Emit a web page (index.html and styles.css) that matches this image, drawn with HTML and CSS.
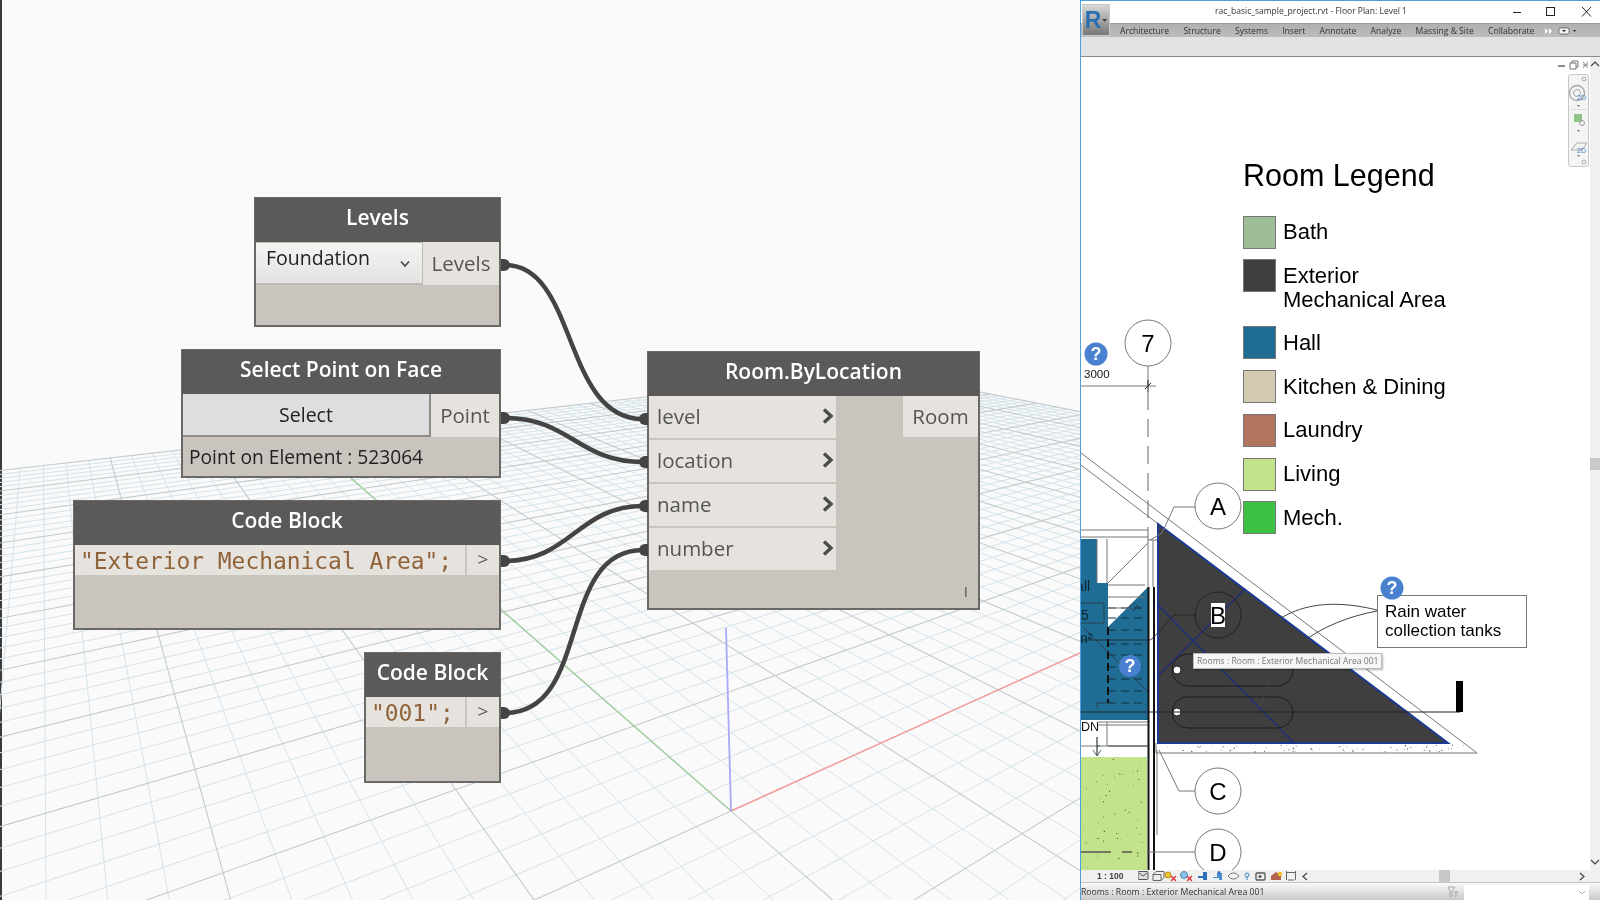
FILE: index.html
```html
<!DOCTYPE html>
<html lang="en">
<head>
  <meta charset="utf-8">
  <title>Dynamo and Revit</title>
  <link rel="stylesheet" href="styles.css">
</head>
<body>
<div class="app">

  <!-- Dynamo canvas -->
  <div class="canvas">
    <svg class="layer" id="grid" viewBox="0 0 1080 900"></svg>

    <div class="node node-levels">
      <div class="node-title">Levels</div>
      <div class="row">
        <div class="dropdown">
          <span>Foundation</span>
          <svg width="12" height="8" viewBox="0 0 12 8"><path d="M2 1.500 6 6l4-4.500" fill="none" stroke="#444" stroke-width="1.600"/></svg>
        </div>
        <div class="port-out port-levels">Levels</div>
      </div>
    </div>

    <div class="node node-point">
      <div class="node-title">Select Point on Face</div>
      <div class="row">
        <div class="select-btn">Select</div>
        <div class="port-out port-point">Point</div>
      </div>
      <div class="node-value">Point on Element : 523064</div>
    </div>

    <div class="node node-code1">
      <div class="node-title">Code Block</div>
      <div class="row row-code">
        <div class="code">"Exterior Mechanical Area";</div>
        <div class="code-out">&gt;</div>
      </div>
    </div>

    <div class="node node-code2">
      <div class="node-title">Code Block</div>
      <div class="row row-code">
        <div class="code">"001";</div>
        <div class="code-out">&gt;</div>
      </div>
    </div>

    <div class="node node-room">
      <div class="node-title">Room.ByLocation</div>
      <div class="room-body">
        <div class="inputs">
          <div class="port-in"><span>level</span><svg class="chev" viewBox="0 0 14 18"><path d="M3 2.500 10 9l-7 6.500" /></svg></div>
          <div class="port-in"><span>location</span><svg class="chev" viewBox="0 0 14 18"><path d="M3 2.500 10 9l-7 6.500" /></svg></div>
          <div class="port-in"><span>name</span><svg class="chev" viewBox="0 0 14 18"><path d="M3 2.500 10 9l-7 6.500" /></svg></div>
          <div class="port-in"><span>number</span><svg class="chev" viewBox="0 0 14 18"><path d="M3 2.500 10 9l-7 6.500" /></svg></div>
        </div>
        <div class="port-out port-room">Room</div>
      </div>
      <div class="lacing">I</div>
    </div>

    <svg class="layer" viewBox="0 0 1080 900">
      <g class="wires">
        <path d="M505 265C578 265 562 419 643 419"/>
        <path d="M505 418C570 418 578 462 643 462"/>
        <path d="M505 561C570 561 578 506 643 506"/>
        <path d="M505 713C592 713 556 550 643 550"/>
      </g>
      <g class="ports">
        <path d="M501 259h3a6 6 0 0 1 0 12h-3z"/>
        <path d="M501 412h3a6 6 0 0 1 0 12h-3z"/>
        <path d="M501 555h3a6 6 0 0 1 0 12h-3z"/>
        <path d="M501 707h3a6 6 0 0 1 0 12h-3z"/>
        <path d="M648 413h-3a6 6 0 0 0 0 12h3z"/>
        <path d="M648 456h-3a6 6 0 0 0 0 12h3z"/>
        <path d="M648 500h-3a6 6 0 0 0 0 12h3z"/>
        <path d="M648 544h-3a6 6 0 0 0 0 12h3z"/>
      </g>
    </svg>
  </div>

  <!-- Revit window -->
  <div class="revit">
    <div class="logo">R<svg width="5" height="3" viewBox="0 0 5 3"><path d="M0 0h5L2.500 3z" fill="#444"/></svg></div>
    <div class="titlebar">
      <div class="doc-title">rac_basic_sample_project.rvt - Floor Plan: Level 1</div>
      <svg class="win-btns" width="80" height="14" viewBox="0 0 80 14">
        <path d="M0 7.500h8" stroke="#222"/>
        <rect x="33.500" y="2.500" width="8" height="8" fill="none" stroke="#222"/>
        <path d="M69 2l9 9.500M78 2l-9 9.500" stroke="#222"/>
      </svg>
    </div>
    <div class="tabs">
      <span>Architecture</span><span>Structure</span><span>Systems</span><span>Insert</span><span>Annotate</span><span>Analyze</span><span>Massing &amp; Site</span><span>Collaborate</span>
      <svg class="tab-more" width="34" height="8" viewBox="0 0 34 8">
        <path d="M0 1l3 3-3 3zM4 1l3 3-3 3z" fill="#fff"/>
        <rect x="14" y="1" width="10" height="6" rx="1.500" fill="#f2f2f2" stroke="#333" stroke-width=".6"/>
        <path d="M17 3h4l-2 2zM28 3h3l-1.500 2z" fill="#222"/>
      </svg>
    </div>
    <div class="ribbon"></div>

    <div class="view-row">
      <div class="sheet">
        <svg class="plan" viewBox="1081 57 509 813">
          <!-- hall -->
          <path class="hall" d="M1081 539h16v44h11v44l40-40v133h-67z"/>
          <g class="stair">
            <path d="M1108 608h40M1108 618h40M1108 630h40M1108 644h40M1108 655h40M1108 667h40M1108 679h40M1108 691h40M1108 703h40"/>
          </g>
          <path class="thick-dash" d="M1108 627v76"/>
          <path class="thin" d="M1097 708v-5h11M1083 627l65 65M1081 603h23v20h-23M1135 602l-6 5 5 4 3-6 3 4"/>
          <text class="tag" x="1066" y="591">Hall</text>
          <text class="tag" x="1081" y="620">5</text>
          <text class="tag" x="1076" y="643">m²</text>

          <!-- living -->
          <rect class="living" x="1081" y="757" width="66" height="113"/>
          <g id="speck-living" class="speck"></g>
          <path class="green-dash" d="M1081 852h30M1122 852h10"/>

          <!-- walls and stair lines -->
          <path class="wall" d="M1081 530h67M1081 537h67M1097 539v44M1107 539v44M1108 583l40-40M1148 540v47M1153 540v47M1148 540h9M1081 722h67M1081 725h67M1081 746h67M1107 722v24M1097 725v30M1108 585h37M1108 597h37M1108 608h22"/>
          <path class="wall-heavy" d="M1148.500 587V870M1154 587V870"/>
          <path class="wall-shade" d="M1157 750v85"/>
          <path class="thin" d="M1097 725v30M1093 750l4 6 4-6M1100 746h-3M1108 746h40M1148 852h-1"/>
          <rect x="1081" y="720" width="17" height="17" fill="#fff"/>
          <text class="tag tag-dn" x="1081" y="731">DN</text>

          <!-- outer diagonal -->
          <path class="wall" d="M1081 453 1477 753H1156v-10M1081 465 1157 523"/>

          <!-- exterior mechanical area -->
          <path class="room" d="M1158 524 1448 743H1158z"/>
          <path class="room-edge" d="M1158 524 1448 743H1158z"/>
          <path class="beam" d="M1158 676 1245 589M1158 605 1294 743"/>
          <g id="speck-slab" class="speck"></g>
          <rect class="pill" x="1172" y="654" width="121" height="32" rx="16"/>
          <rect class="pill" x="1172" y="697" width="121" height="31" rx="15.500"/>
          <circle class="dot" cx="1177" cy="670" r="4"/>
          <circle class="dot" cx="1177" cy="712" r="4"/>
          <path class="dark" d="M1081 712H1460"/>
          <rect x="1456" y="681" width="7" height="31" fill="#000"/>
          <path class="leader" d="M1377 610C1320 596 1272 606 1243 660"/>
          <path class="leader" d="M1377 611C1320 622 1276 650 1260 707M1256 698l4 9 4-8"/>

          <!-- grid 7 -->
          <path class="wall" d="M1148 366v20M1081 386H1156"/>
          <path class="grid-dash" d="M1148 392V540"/>
          <path class="dark" d="M1145 389l6-6M1148 380v12"/>
          <text class="dim" x="1084" y="378">3000</text>

          <!-- leaders -->
          <path class="wall" d="M1196 507h-22l-12 26-12 7M1179 791h17M1179 791l-20-41M1196 852h-48"/>
          <path class="dark-thin" d="M1196 615h-22l-21 23-3 2h-69"/>

          <!-- bubbles -->
          <circle class="bubble" cx="1148" cy="343" r="23"/>
          <circle class="bubble" cx="1218" cy="506" r="23"/>
          <circle class="bubble bubble-dark" cx="1218" cy="615" r="23"/>
          <circle class="bubble" cx="1218" cy="791" r="23"/>
          <circle class="bubble" cx="1218" cy="852" r="23"/>
          <rect x="1211" y="603" width="14" height="24" fill="#fff"/>
          <text class="bub-text" x="1148" y="352">7</text>
          <text class="bub-text" x="1218" y="515">A</text>
          <text class="bub-text" x="1218" y="624">B</text>
          <text class="bub-text" x="1218" y="800">C</text>
          <text class="bub-text" x="1218" y="861">D</text>

          <!-- warnings -->
          <circle class="warn" cx="1096" cy="354" r="11.500"/>
          <text class="warn-text" x="1096" y="360">?</text>
          <circle class="warn" cx="1130" cy="666" r="11"/>
          <text class="warn-text" x="1130" y="672">?</text>
        </svg>

        <div class="legend">
          <h2 class="legend-title">Room Legend</h2>
          <div class="legend-row"><i class="swatch sw-bath"></i><span>Bath</span></div>
          <div class="legend-row legend-two"><i class="swatch sw-ext"></i><span>Exterior<br>Mechanical Area</span></div>
          <div class="legend-row"><i class="swatch sw-hall"></i><span>Hall</span></div>
          <div class="legend-row"><i class="swatch sw-kitchen"></i><span>Kitchen &amp; Dining</span></div>
          <div class="legend-row"><i class="swatch sw-laundry"></i><span>Laundry</span></div>
          <div class="legend-row"><i class="swatch sw-living"></i><span>Living</span></div>
          <div class="legend-row"><i class="swatch sw-mech"></i><span>Mech.</span></div>
        </div>

        <div class="callout">Rain water<br>collection tanks</div>
        <svg class="callout-warn" width="24" height="24" viewBox="0 0 24 24">
          <circle class="warn" cx="12" cy="12" r="11.500"/>
          <text class="warn-text" x="12" y="18">?</text>
        </svg>
        <div class="tooltip">Rooms : Room : Exterior Mechanical Area 001</div>

        <svg class="view-ctl" width="30" height="10" viewBox="0 0 30 10">
          <path d="M0 6h7" stroke="#888" stroke-width="2"/>
          <path d="M12 3h6v6h-6zM14 3V1h6v6h-2" fill="none" stroke="#777"/>
          <path d="M25 2l5 6M30 2l-5 6M25 5h5" fill="none" stroke="#888"/>
        </svg>

        <div class="navbar">
          <svg width="21" height="93" viewBox="0 0 21 93">
            <circle cx="16" cy="5" r="2" fill="none" stroke="#aaa"/>
            <circle cx="9" cy="19" r="7.500" fill="none" stroke="#aaa" stroke-width="1.400"/>
            <circle cx="9" cy="19" r="3.500" fill="none" stroke="#aaa"/>
            <text class="nav-2d" x="9" y="26">2D</text>
            <path d="M9 31h3l-1.500 2z" fill="#777"/>
            <path d="M2 35.500h17" stroke="#ddd"/>
            <rect x="6" y="40" width="8" height="8" fill="#8fc58a"/>
            <circle cx="14" cy="49" r="2.500" fill="none" stroke="#999"/>
            <path d="M9 56h3l-1.500 2z" fill="#777"/>
            <path d="M3 76l6-7h10l-5 7z" fill="none" stroke="#aaa"/>
            <text class="nav-2d" x="9" y="79">2D</text>
            <path d="M9 81h3l-1.500 2z" fill="#777"/>
            <circle cx="16" cy="88" r="2" fill="none" stroke="#aaa"/>
          </svg>
        </div>
      </div>

      <div class="vscroll">
        <svg width="10" height="6" viewBox="0 0 10 6"><path d="M1 5l4-4 4 4" fill="none" stroke="#444" stroke-width="1.200"/></svg>
        <div class="vthumb"></div>
        <svg width="10" height="6" viewBox="0 0 10 6"><path d="M1 1l4 4 4-4" fill="none" stroke="#444" stroke-width="1.200"/></svg>
      </div>
    </div>

    <div class="viewbar">
      <span class="scale">1 : 100</span>
      <svg class="view-icons" width="158" height="12" viewBox="0 0 158 12">
        <rect x="0" y="1.500" width="10" height="8" rx="1" fill="#ddd" stroke="#555"/>
        <path d="M1 3l4 3 4-3" fill="none" stroke="#555"/>
        <path d="M15 4.500h8v6h-8zM15 4.500l3-3h8v6l-3 3" fill="#eee" stroke="#666"/>
        <circle cx="30" cy="5" r="3" fill="#f1c232" stroke="#b78c10"/>
        <path d="M33 6l5 5M38 6l-5 5" stroke="#d33" stroke-width="1.400"/>
        <circle cx="46" cy="5" r="3.500" fill="#8cc4e8" stroke="#4a86b8"/>
        <path d="M49 6l5 5M54 6l-5 5" stroke="#d33" stroke-width="1.400"/>
        <path d="M60 6h5V2h4v8h-4V8h-5z" fill="#2c6fb5"/>
        <path d="M75 7h4V3h5v7h-3V8h-6z" fill="#4d8dd1"/><circle cx="81" cy="2.500" r="1.500" fill="#2c6fb5"/>
        <path d="M90 6c3-4 8-4 11 0-3 4-8 4-11 0z" fill="none" stroke="#777"/>
        <circle cx="109" cy="5" r="2" fill="none" stroke="#3d86c6"/><path d="M109 7v3" stroke="#3d86c6"/>
        <rect x="118" y="3" width="9" height="7" rx="1" fill="none" stroke="#555" stroke-width="1.300"/><circle cx="122" cy="6.500" r="1.500" fill="#555"/>
        <path d="M133 6l5-4 5 4v4h-10z" fill="#b5624f"/><rect x="140" y="2" width="4" height="4" fill="#f1c232"/>
        <path d="M148.500 2.500h9M148.500 1v9M157.500 1v9M150 10h6" fill="none" stroke="#666"/>
      </svg>
      <svg class="hbar-arrow" width="6" height="9" viewBox="0 0 6 9"><path d="M5 1 1 4.500 5 8" fill="none" stroke="#444" stroke-width="1.200"/></svg>
      <div class="hthumb"></div>
      <svg class="hbar-arrow hbar-right" width="6" height="9" viewBox="0 0 6 9"><path d="M1 1l4 3.500L1 8" fill="none" stroke="#444" stroke-width="1.200"/></svg>
    </div>

    <div class="statusbar">
      <span class="status-text">Rooms : Room : Exterior Mechanical Area 001</span>
      <svg class="status-filter" width="12" height="12" viewBox="0 0 12 12"><path d="M1 1h7L5 5v5L3 11V5zM9 5v6M7 7l2-2 2 2" fill="none" stroke="#aaa"/></svg>
      <div class="status-box"><svg width="8" height="5" viewBox="0 0 8 5"><path d="M1 1l3 3 3-3" fill="none" stroke="#aaa"/></svg></div>
    </div>
  </div>

</div>
<script src="plan.js"></script>
</body>
</html>
```

FILE: styles.css
```css
html, body {
  margin: 0;
  padding: 0;
  overflow: hidden;
  background: #f9f9f9;
}
.app {
  display: flex;
  width: 1600px;
  height: 900px;
  filter: blur(0.4px);
  font-family: "Open Sans", sans-serif;
}

/* Dynamo canvas */
.canvas {
  position: relative;
  flex: 1;
  overflow: hidden;
  background: #fafafa;
}
.canvas::before {
  content: "";
  position: absolute;
  left: 0;
  top: 0;
  bottom: 0;
  width: 2px;
  background: #3a3a3a;
}
.layer {
  position: absolute;
  left: 0;
  top: 0;
  width: 1080px;
  height: 900px;
  pointer-events: none;
}
.minor { stroke: #d5e3ea; stroke-width: 1; fill: none; }
.major { stroke: #c3cbce; stroke-width: 1.100; fill: none; }
.axis-x { stroke: #f79a9a; stroke-width: 1.400; }
.axis-y { stroke: #a3cf9f; stroke-width: 1.400; }
.axis-z { stroke: #a9a9f7; stroke-width: 1.800; }
.wires path {
  fill: none;
  stroke: #444;
  stroke-width: 4.500;
}
.ports path { fill: #444; }

.node {
  position: absolute;
  box-sizing: border-box;
  display: flex;
  flex-direction: column;
  background: #c9c4bd;
  border: 2px solid #6b6966;
  color: #555;
  font-size: 20.500px;
}
.node-levels { left: 254px; top: 197px; width: 247px; height: 130px; }
.node-point { left: 181px; top: 349px; width: 320px; height: 129px; }
.node-code1 { left: 73px; top: 500px; width: 428px; height: 130px; }
.node-code2 { left: 364px; top: 652px; width: 137px; height: 131px; }
.node-room { left: 647px; top: 351px; width: 333px; height: 259px; }

.node-title {
  height: 44px;
  flex: none;
  margin: -1px -1px 0;
  background: #5c5a58;
  color: #fff;
  font-size: 21px;
  font-weight: 600;
  line-height: 38px;
  text-align: center;
}
.row {
  display: flex;
  height: 43px;
  flex: none;
}
.dropdown {
  flex: 1;
  box-sizing: border-box;
  display: flex;
  justify-content: space-between;
  padding: 0 11px 0 10px;
  background: linear-gradient(#f4f4f3, #e4e3e1);
  border: 1px solid #bdb9b4;
  border-width: 1px 1px 2px 0;
  color: #222;
  font-size: 19.500px;
  line-height: 30px;
}
.dropdown svg { margin-top: 17px; }
.port-out {
  flex: none;
  box-sizing: border-box;
  background: #e6e3de;
  text-align: center;
  line-height: 43px;
}
.port-levels { width: 76px; }
.port-point { width: 68px; }
.select-btn {
  flex: 1;
  box-sizing: border-box;
  background: #dedede;
  border: 1px solid #8f8c88;
  border-width: 0 2px 2px 0;
  color: #222;
  font-size: 19.500px;
  text-align: center;
  line-height: 41px;
}
.node-value {
  padding-left: 6px;
  color: #222;
  font-size: 19.200px;
  line-height: 40px;
}
.row-code { height: 30px; }
.code {
  flex: 1;
  box-sizing: border-box;
  background: #e6e3de;
  color: #8f6238;
  font-family: "DejaVu Sans Mono", monospace;
  font-size: 22.900px;
  line-height: 32px;
  padding-left: 5px;
  white-space: nowrap;
  overflow: hidden;
}
.code-out {
  width: 34px;
  flex: none;
  background: #e6e3de;
  border-left: 2px solid #c9c4bd;
  box-sizing: border-box;
  text-align: center;
  line-height: 28px;
  font-size: 19px;
}
.room-body {
  display: flex;
  justify-content: space-between;
}
.inputs {
  width: 187px;
  display: flex;
  flex-direction: column;
  gap: 2.300px;
}
.port-in {
  height: 41.800px;
  display: flex;
  align-items: center;
  justify-content: space-between;
  padding: 0 1px 2px 8px;
  box-sizing: border-box;
  background: #e6e3de;
}
.chev {
  width: 14px;
  height: 18px;
  fill: none;
  stroke: #4c4c4c;
  stroke-width: 3.400;
}
.port-room {
  width: 75px;
  height: 41px;
  line-height: 41px;
}
.lacing {
  margin-top: auto;
  padding: 0 10px 7px 0;
  text-align: right;
  font-size: 15px;
  line-height: 20px;
}

/* Revit window */
.revit {
  position: relative;
  flex: none;
  box-sizing: border-box;
  width: 520px;
  height: 900px;
  display: flex;
  flex-direction: column;
  background: #fff;
  border-left: 1px solid #4c9fdc;
  border-top: 1px solid #4c9fdc;
  color: #333;
}
.logo {
  position: absolute;
  left: 1px;
  top: 3px;
  z-index: 1;
  width: 26px;
  height: 30px;
  display: flex;
  align-items: center;
  justify-content: center;
  gap: 1px;
  background: linear-gradient(#d8d8d8, #777);
  border: 1px solid #c8c8c8;
  color: #2a6fb0;
  font-family: "Liberation Sans", sans-serif;
  font-size: 23px;
  font-weight: bold;
}
.titlebar {
  position: relative;
  height: 22px;
  flex: none;
  display: flex;
  align-items: center;
  justify-content: flex-end;
}
.doc-title {
  position: absolute;
  left: 0;
  top: 4px;
  width: 460px;
  text-align: center;
  font-size: 8.500px;
}
.win-btns { flex: none; margin-right: 7px; }
.tabs {
  height: 14px;
  flex: none;
  display: flex;
  align-items: center;
  gap: 14.200px;
  padding-left: 39px;
  background: linear-gradient(#b0b0b0, #bcbcbc);
  border-top: 1px solid #999;
  box-sizing: border-box;
  font-size: 8.600px;
  white-space: nowrap;
}
.tab-more { margin-left: -4px; }
.ribbon {
  height: 20px;
  flex: none;
  box-sizing: border-box;
  background: #e1e2e3;
  border-bottom: 1px solid #8a8a8a;
}
.view-row {
  flex: 1;
  display: flex;
  min-height: 0;
}
.sheet {
  position: relative;
  flex: 1;
  overflow: hidden;
  background: #fff;
}
.plan {
  position: absolute;
  left: 0;
  top: 0;
  width: 509px;
  height: 813px;
}
.hall { fill: #1f6d94; }
.living { fill: #c3e38a; }
.room { fill: #3f3f3f; }
.room-edge { fill: none; stroke: #1b3a93; stroke-width: 2; }
.beam { fill: none; stroke: #1a2f7c; stroke-width: 1.300; }
.pill { fill: none; stroke: #1c1c1c; stroke-width: 1; }
.dot { fill: #fff; stroke: #222; }
.dark { fill: none; stroke: #222; stroke-width: 1; }
.dark-thin { fill: none; stroke: #222; stroke-width: .8; }
.thin { fill: none; stroke: #2b3a42; stroke-width: .8; }
.stair path { fill: none; stroke: #14303f; stroke-dasharray: 8 5; stroke-width: 1; }
.thick-dash { fill: none; stroke: #111; stroke-width: 2; stroke-dasharray: 8 4; }
.wall { fill: none; stroke: #777; stroke-width: 1; }
.wall-heavy { fill: none; stroke: #111; stroke-width: 2; }
.wall-shade { fill: none; stroke: #bbb; stroke-width: 2; }
.green-dash { fill: none; stroke: #555; stroke-width: 1.300; }
.grid-dash { fill: none; stroke: #666; stroke-width: 1; stroke-dasharray: 18 9; }
.leader { fill: none; stroke: #444; stroke-width: 1; }
.speck circle { fill: #333; }
.tag { fill: #0e2533; font-family: "Liberation Sans", sans-serif; font-size: 14px; }
.tag-dn { fill: #111; font-size: 12.500px; }
.dim { fill: #111; font-family: "Liberation Sans", sans-serif; font-size: 11.500px; }
.bubble { fill: #fff; stroke: #777; stroke-width: 1; }
.bubble-dark { fill: none; stroke: #222; }
.bub-text {
  fill: #000;
  font-family: "Liberation Sans", sans-serif;
  font-size: 24px;
  text-anchor: middle;
}
.warn { fill: #4a80d0; }
.warn-text {
  fill: #fff;
  font-family: "Liberation Sans", sans-serif;
  font-size: 18px;
  font-weight: bold;
  text-anchor: middle;
}
.legend {
  position: absolute;
  left: 162px;
  top: 98px;
  width: 300px;
  color: #000;
  font-family: "Liberation Sans", sans-serif;
  font-size: 22px;
  line-height: 24px;
}
.legend-title {
  margin: 0 0 20.500px;
  font-size: 30.500px;
  font-weight: normal;
  line-height: 40px;
}
.legend-row {
  display: flex;
  align-items: center;
  gap: 7px;
  margin-bottom: 10.800px;
}
.legend-two {
  align-items: flex-start;
  margin-bottom: 14px;
}
.legend-two span { margin-top: 5px; }
.swatch {
  width: 33px;
  height: 33px;
  flex: none;
  box-sizing: border-box;
  border: 1px solid #777;
}
.sw-bath { background: #9dbd96; }
.sw-ext { background: #3f3f3f; }
.sw-hall { background: #1f6d94; }
.sw-kitchen { background: #d2cbb1; }
.sw-laundry { background: #b1745e; }
.sw-living { background: #c3e38a; }
.sw-mech { background: #3dc142; }
.callout {
  position: absolute;
  left: 296px;
  top: 538px;
  box-sizing: border-box;
  width: 150px;
  height: 53px;
  padding: 6px 0 0 7px;
  background: #fff;
  border: 1px solid #777;
  color: #000;
  font-family: "Liberation Sans", sans-serif;
  font-size: 17px;
  line-height: 19px;
}
.callout-warn {
  position: absolute;
  left: 299px;
  top: 519px;
}
.tooltip {
  position: absolute;
  left: 112px;
  top: 596px;
  height: 14px;
  padding: 0 3px;
  background: #f6f6f6;
  border: 1px solid #bbb;
  box-shadow: 1px 1px 2px rgba(0,0,0,0.3);
  color: #777;
  font-size: 8.600px;
  line-height: 14px;
  white-space: nowrap;
}
.view-ctl {
  position: absolute;
  left: 477px;
  top: 3px;
}
.navbar {
  position: absolute;
  left: 487px;
  top: 17px;
  width: 21px;
  height: 93px;
  box-sizing: border-box;
  background: #f4f4f4;
  border: 1px solid #c8c8c8;
  border-radius: 3px;
}
.navbar svg { display: block; margin: -1px; }
.nav-2d {
  fill: #4a80c4;
  font-family: "Liberation Sans", sans-serif;
  font-size: 7px;
}
.vscroll {
  position: relative;
  width: 10px;
  flex: none;
  display: flex;
  flex-direction: column;
  justify-content: space-between;
  align-items: center;
  padding: 4px 0 5px;
  box-sizing: border-box;
  background: #f0f0f0;
}
.vthumb {
  position: absolute;
  left: 0;
  right: 0;
  top: 401px;
  height: 12px;
  background: #c8c8c8;
}
.viewbar {
  position: relative;
  height: 13px;
  flex: none;
  display: flex;
  align-items: center;
  background: #f0f0f0;
  border-bottom: 1px solid #c4c4c4;
  box-sizing: border-box;
  font-family: "Liberation Sans", sans-serif;
  font-size: 8.500px;
  font-weight: bold;
}
.scale { margin-left: 16px; color: #444; width: 41px; flex: none; }
.view-icons { flex: none; }
.hbar-arrow { margin-left: 6px; flex: none; }
.hthumb {
  position: absolute;
  left: 358px;
  top: 0;
  width: 11px;
  height: 13px;
  background: #c8c8c8;
}
.hbar-right { margin-left: 271px; }
.statusbar {
  height: 17px;
  flex: none;
  display: flex;
  align-items: center;
  background: linear-gradient(#fafafa, #c9c9c9);
  font-size: 8.700px;
  color: #333;
}
.status-text { width: 366px; flex: none; white-space: nowrap; padding-top: 1px; }
.status-filter { flex: none; }
.status-box {
  width: 125px;
  height: 15px;
  flex: none;
  margin-left: 5px;
  margin-top: 2px;
  display: flex;
  align-items: center;
  justify-content: flex-end;
  padding-right: 3px;
  box-sizing: border-box;
  background: #fff;
}
```

FILE: plan.js
```js
// perspective floor grid, origin at the axes corner
const NS = 'http://www.w3.org/2000/svg';
const O = { x: 731, y: 811 };
const c1 = 0.136, c2 = 0.164;
const A = { x: 170, y: -77 };
const B = { x: -113, y: -99 };

function project(u, v) {
  const w = 1 + c1 * u + c2 * v;
  return {
    x: O.x + (A.x * u + B.x * v) / w,
    y: O.y + (A.y * u + B.y * v) / w
  };
}

function gridLine(u1, v1, u2, v2) {
  // cut the line where it goes behind the camera
  const w1 = 1 + c1 * u1 + c2 * v1;
  const w2 = 1 + c1 * u2 + c2 * v2;
  const min = 0.06;
  if (w1 < min && w2 < min) return '';
  if (w1 < min) {
    const t = (min - w1) / (w2 - w1);
    u1 += (u2 - u1) * t;
    v1 += (v2 - v1) * t;
  } else if (w2 < min) {
    const t = (min - w2) / (w1 - w2);
    u2 += (u1 - u2) * t;
    v2 += (v1 - v2) * t;
  }
  const a = project(u1, v1);
  const b = project(u2, v2);
  return `M${a.x.toFixed(1)} ${a.y.toFixed(1)}L${b.x.toFixed(1)} ${b.y.toFixed(1)}`;
}

function addPath(parent, cls, d) {
  const p = document.createElementNS(NS, 'path');
  p.setAttribute('class', cls);
  p.setAttribute('d', d);
  parent.appendChild(p);
}

const grid = document.getElementById('grid');
let minor = '', major = '';
for (let i = -50; i <= 50; i++) {
  const t = i / 5;
  const d = gridLine(t, -10, t, 10) + gridLine(-10, t, 10, t);
  if (i % 5 === 0) major += d;
  else minor += d;
}
addPath(grid, 'minor', minor);
addPath(grid, 'major', major);
addPath(grid, 'axis-x', gridLine(0, 0, 10, 0));
addPath(grid, 'axis-y', gridLine(0, 0, 0, 10));
addPath(grid, 'axis-z', 'M731 811L726 628');

// concrete and earth speckle
let seed = 7;
function rnd() {
  seed = (seed * 16807) % 2147483647;
  return seed / 2147483647;
}
function speckle(id, x, y, w, h, count, size) {
  const g = document.getElementById(id);
  for (let i = 0; i < count; i++) {
    const c = document.createElementNS(NS, 'circle');
    c.setAttribute('cx', (x + rnd() * w).toFixed(1));
    c.setAttribute('cy', (y + rnd() * h).toFixed(1));
    c.setAttribute('r', (size * (0.5 + rnd())).toFixed(2));
    g.appendChild(c);
  }
}
speckle('speck-living', 1083, 759, 62, 109, 55, 0.42);
speckle('speck-slab', 1160, 745, 305, 7, 70, 0.42);
```
